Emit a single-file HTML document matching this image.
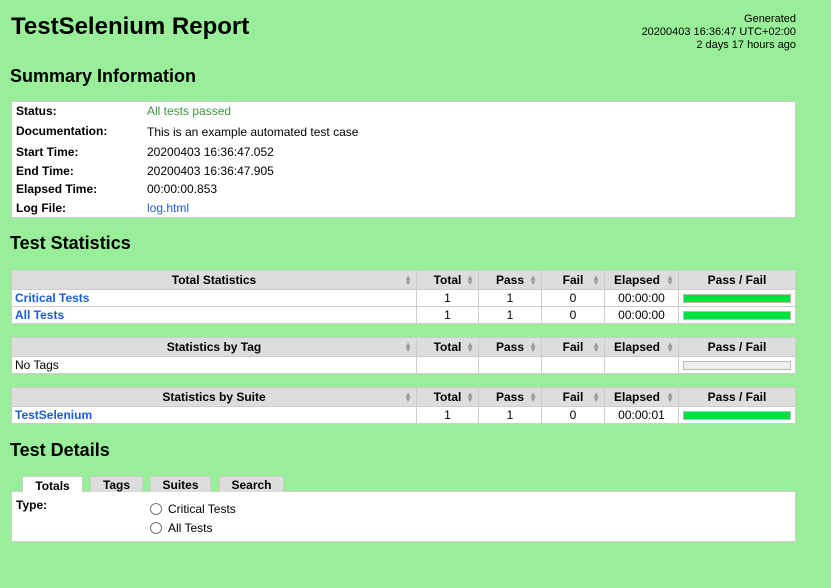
<!DOCTYPE html>
<html><head><meta charset="utf-8"><style>
body{margin:0;width:831px;height:588px;background:#99ee99;font-family:"Liberation Sans",Arial,sans-serif;font-size:12px;color:#000;position:relative;overflow:hidden}
.a{position:absolute;white-space:nowrap}
.box{position:absolute;background:#fff;border:1px solid #ccc;box-sizing:border-box}
.lbl{font-weight:bold}
a{color:#1a5fd0;text-decoration:none}
table{position:absolute;left:11px;width:785px;border-collapse:collapse;background:#fff;table-layout:fixed}
td,th{border:1px solid #ccc;padding:0 3px;height:16px;font-size:12px;text-align:center;overflow:hidden}
th{background:#ddd;font-weight:bold;height:18px;position:relative}
th .s{position:absolute;right:4px;top:4px;color:#999;font-size:8px;line-height:5px}
td.n{text-align:left;font-weight:bold}
.bar{height:7px;background:#00e040;border:1px solid #bbb;margin:0 1px}
.bar.e{background:#eee}
.tab{position:absolute;top:476px;height:16px;background:#ddd;border:1px solid #ccc;border-bottom:none;text-align:center;font-weight:bold;line-height:16px;box-sizing:border-box}
.rad{display:inline-block;width:10px;height:10px;border:1px solid #777;border-radius:50%;vertical-align:-2px;margin-right:6px;background:#fff}
</style></head><body>
<div class="a" style="left:11px;top:13px;font-size:24px;font-weight:bold">TestSelenium Report</div>
<div class="a" style="right:35px;top:13px;text-align:right;line-height:13px;font-size:11px">Generated<br>20200403 16:36:47 UTC+02:00<br>2 days 17 hours ago</div>
<div class="a" style="left:10px;top:66px;font-size:18px;font-weight:bold">Summary Information</div>
<div class="box" style="left:11px;top:101px;width:785px;height:117px"></div>
<div class="a lbl" style="left:16px;top:104px">Status:</div><div class="a" style="left:147px;top:104px;color:#3a9a3a">All tests passed</div>
<div class="a lbl" style="left:16px;top:124px">Documentation:</div><div class="a" style="left:147px;top:125px">This is an example automated test case</div>
<div class="a lbl" style="left:16px;top:145px">Start Time:</div><div class="a" style="left:147px;top:145px">20200403 16:36:47.052</div>
<div class="a lbl" style="left:16px;top:164px">End Time:</div><div class="a" style="left:147px;top:164px">20200403 16:36:47.905</div>
<div class="a lbl" style="left:16px;top:182px">Elapsed Time:</div><div class="a" style="left:147px;top:182px">00:00:00.853</div>
<div class="a lbl" style="left:16px;top:201px">Log File:</div><div class="a" style="left:147px;top:201px"><a>log.html</a></div>
<div class="a" style="left:10px;top:233px;font-size:18px;font-weight:bold">Test Statistics</div>

<table style="top:270px">
<colgroup><col style="width:405px"><col style="width:62px"><col style="width:63px"><col style="width:63px"><col style="width:74px"><col></colgroup>
<tr><th>Total Statistics<span class="s">▲<br>▼</span></th><th>Total<span class="s">▲<br>▼</span></th><th>Pass<span class="s">▲<br>▼</span></th><th>Fail<span class="s">▲<br>▼</span></th><th style="padding-right:12px">Elapsed<span class="s">▲<br>▼</span></th><th>Pass / Fail</th></tr>
<tr><td class="n"><a>Critical Tests</a></td><td>1</td><td>1</td><td>0</td><td>00:00:00</td><td><div class="bar"></div></td></tr>
<tr><td class="n"><a>All Tests</a></td><td>1</td><td>1</td><td>0</td><td>00:00:00</td><td><div class="bar"></div></td></tr>
</table>
<table style="top:337px">
<colgroup><col style="width:405px"><col style="width:62px"><col style="width:63px"><col style="width:63px"><col style="width:74px"><col></colgroup>
<tr><th>Statistics by Tag<span class="s">▲<br>▼</span></th><th>Total<span class="s">▲<br>▼</span></th><th>Pass<span class="s">▲<br>▼</span></th><th>Fail<span class="s">▲<br>▼</span></th><th style="padding-right:12px">Elapsed<span class="s">▲<br>▼</span></th><th>Pass / Fail</th></tr>
<tr><td class="n" style="font-weight:normal">No Tags</td><td></td><td></td><td></td><td></td><td><div class="bar e"></div></td></tr>
</table>
<table style="top:387px">
<colgroup><col style="width:405px"><col style="width:62px"><col style="width:63px"><col style="width:63px"><col style="width:74px"><col></colgroup>
<tr><th>Statistics by Suite<span class="s">▲<br>▼</span></th><th>Total<span class="s">▲<br>▼</span></th><th>Pass<span class="s">▲<br>▼</span></th><th>Fail<span class="s">▲<br>▼</span></th><th style="padding-right:12px">Elapsed<span class="s">▲<br>▼</span></th><th>Pass / Fail</th></tr>
<tr><td class="n"><a>TestSelenium</a></td><td>1</td><td>1</td><td>0</td><td>00:00:01</td><td><div class="bar"></div></td></tr>
</table>

<div class="a" style="left:10px;top:440px;font-size:18px;font-weight:bold">Test Details</div>
<div class="box" style="left:11px;top:491px;width:785px;height:51px"></div>
<div class="tab" style="left:22px;width:61px;top:476px;height:17px;background:#fff;line-height:18px">Totals</div>
<div class="tab" style="left:90px;width:53px">Tags</div>
<div class="tab" style="left:150px;width:61px">Suites</div>
<div class="tab" style="left:219px;width:65px">Search</div>
<div class="a lbl" style="left:16px;top:498px">Type:</div>
<div class="a" style="left:150px;top:502px"><span class="rad"></span>Critical Tests</div>
<div class="a" style="left:150px;top:521px"><span class="rad"></span>All Tests</div>
</body></html>
